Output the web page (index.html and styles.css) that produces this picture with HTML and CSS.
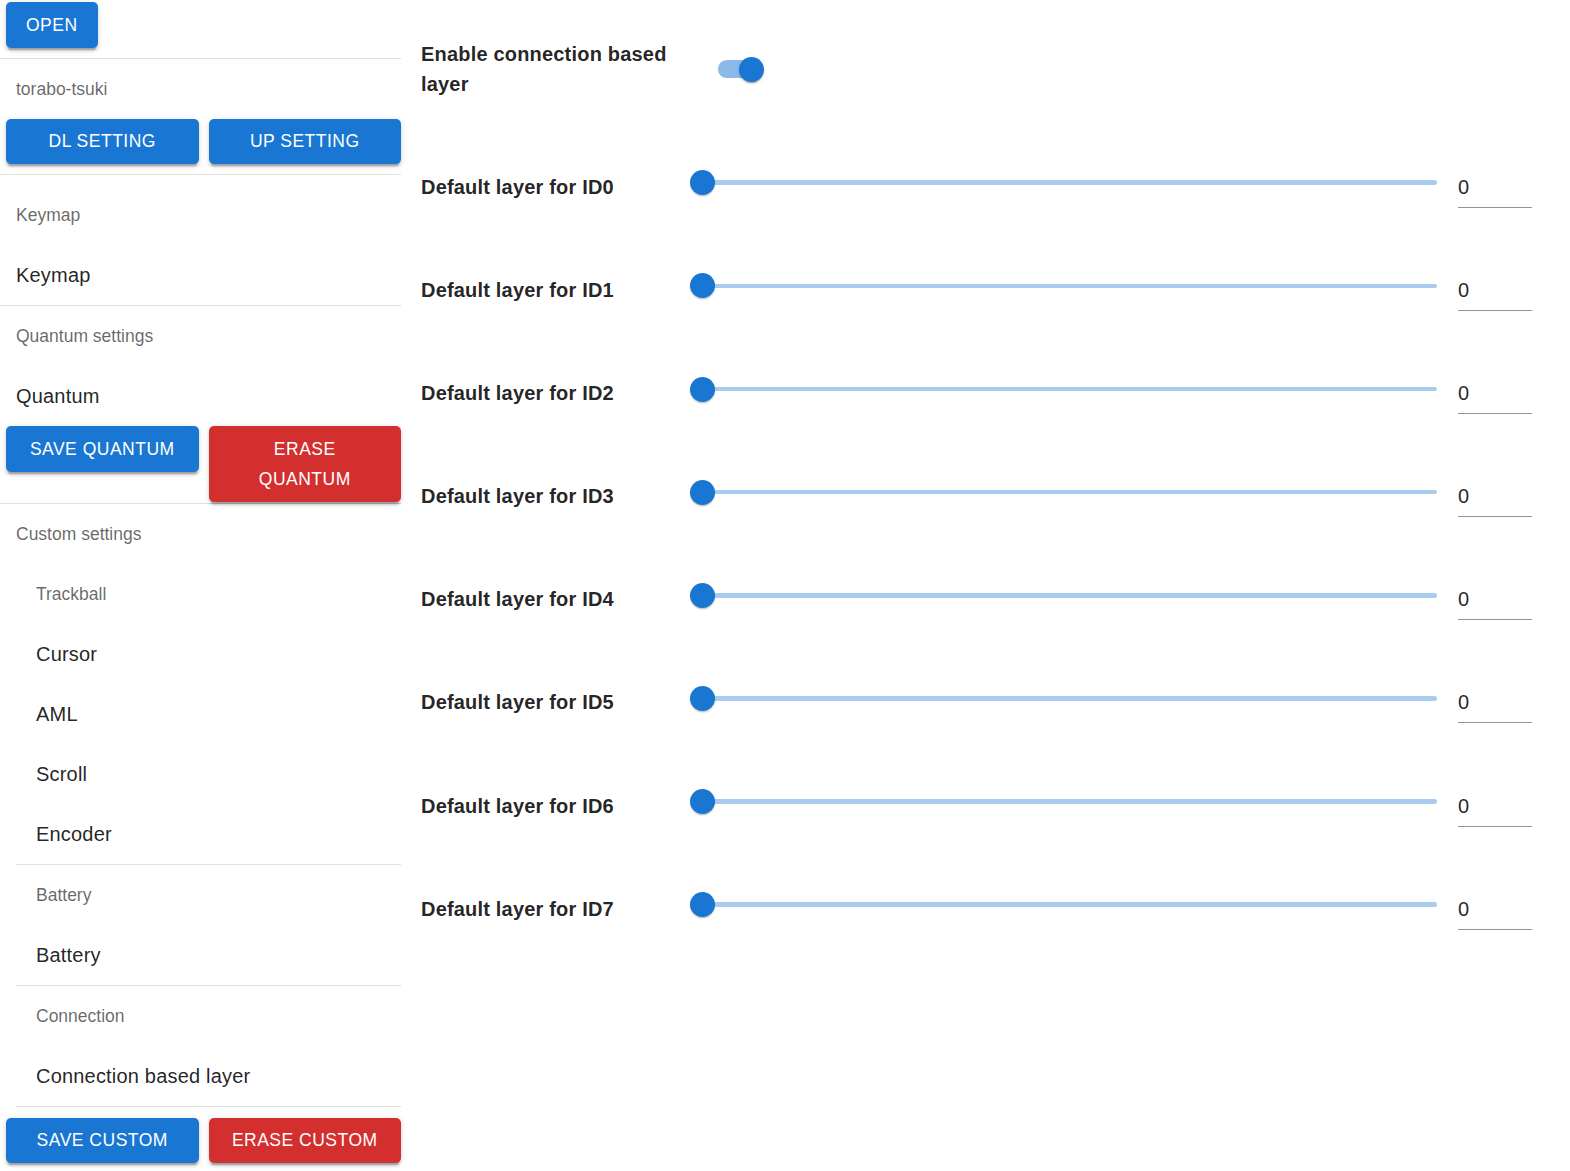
FILE: index.html
```html
<!DOCTYPE html>
<html>
<head>
<meta charset="utf-8">
<title>torabo-tsuki</title>
<link rel="stylesheet" href="styles.css">
</head>
<body>
<div class="app">
  <aside class="sidebar">
    <div class="btn-row top-row">
      <button class="btn primary">OPEN</button>
    </div>
    <div class="divider"></div>
    <div class="subheader">torabo-tsuki</div>
    <div class="btn-row two">
      <button class="btn primary">DL SETTING</button>
      <button class="btn primary">UP SETTING</button>
    </div>
    <div class="divider"></div>
    <div class="subheader gap-top">Keymap</div>
    <div class="item">Keymap</div>
    <div class="divider"></div>
    <div class="subheader">Quantum settings</div>
    <div class="item">Quantum</div>
    <div class="btn-row two tight">
      <button class="btn primary">SAVE QUANTUM</button>
      <button class="btn error"><span class="wrap">ERASE QUANTUM</span></button>
    </div>
    <div class="divider"></div>
    <div class="subheader">Custom settings</div>
    <div class="nested">
      <div class="subheader">Trackball</div>
      <div class="item">Cursor</div>
      <div class="item">AML</div>
      <div class="item">Scroll</div>
      <div class="item">Encoder</div>
    </div>
    <div class="divider inset"></div>
    <div class="nested">
      <div class="subheader">Battery</div>
      <div class="item">Battery</div>
    </div>
    <div class="divider inset"></div>
    <div class="nested">
      <div class="subheader">Connection</div>
      <div class="item">Connection based layer</div>
    </div>
    <div class="divider inset"></div>
    <div class="btn-row two gap-top">
      <button class="btn primary">SAVE CUSTOM</button>
      <button class="btn error">ERASE CUSTOM</button>
    </div>
  </aside>
  <main class="main">
    <div class="enable-row">
      <div class="label">Enable connection based layer</div>
      <div class="switch">
        <div class="switch-track"></div>
        <div class="switch-thumb"></div>
      </div>
    </div>
    <div class="setting-row">
      <div class="label">Default layer for ID0</div>
      <div class="slider"><div class="rail"><div class="thumb"></div></div></div>
      <div class="value">0</div>
    </div>
    <div class="setting-row">
      <div class="label">Default layer for ID1</div>
      <div class="slider"><div class="rail"><div class="thumb"></div></div></div>
      <div class="value">0</div>
    </div>
    <div class="setting-row">
      <div class="label">Default layer for ID2</div>
      <div class="slider"><div class="rail"><div class="thumb"></div></div></div>
      <div class="value">0</div>
    </div>
    <div class="setting-row">
      <div class="label">Default layer for ID3</div>
      <div class="slider"><div class="rail"><div class="thumb"></div></div></div>
      <div class="value">0</div>
    </div>
    <div class="setting-row">
      <div class="label">Default layer for ID4</div>
      <div class="slider"><div class="rail"><div class="thumb"></div></div></div>
      <div class="value">0</div>
    </div>
    <div class="setting-row">
      <div class="label">Default layer for ID5</div>
      <div class="slider"><div class="rail"><div class="thumb"></div></div></div>
      <div class="value">0</div>
    </div>
    <div class="setting-row">
      <div class="label">Default layer for ID6</div>
      <div class="slider"><div class="rail"><div class="thumb"></div></div></div>
      <div class="value">0</div>
    </div>
    <div class="setting-row">
      <div class="label">Default layer for ID7</div>
      <div class="slider"><div class="rail"><div class="thumb"></div></div></div>
      <div class="value">0</div>
    </div>
  </main>
</div>
</body>
</html>
```

FILE: styles.css
```css
* { box-sizing: border-box; }
html, body {
  margin: 0;
  padding: 0;
  background: #fff;
  font-family: "Liberation Sans", Arial, sans-serif;
  color: rgba(0,0,0,0.87);
}
.app {
  display: flex;
  align-items: flex-start;
  width: 1570px;
}
.sidebar {
  width: 401px;
  flex: 0 0 401px;
  padding-top: 2px;
}
.btn-row {
  display: flex;
  gap: 10px;
  padding-left: 6px;
  padding-bottom: 10px;
  align-items: flex-start;
}
.btn-row.two .btn { flex: 1 1 0; }
.btn-row.tight { padding-bottom: 1px; }
.btn-row.gap-top { padding-top: 10.5px; }
.btn {
  border: 0;
  margin: 0;
  font-family: "Liberation Sans", Arial, sans-serif;
  font-size: 17.5px;
  font-weight: 500;
  line-height: 30.6px;
  letter-spacing: 0.5px;
  text-transform: uppercase;
  color: #fff;
  padding: 7.5px 20px;
  border-radius: 5px;
  box-shadow: 0 3.75px 1.25px -2.5px rgba(0,0,0,0.2), 0 2.5px 2.5px 0 rgba(0,0,0,0.14), 0 1.25px 6.25px 0 rgba(0,0,0,0.12);
  cursor: pointer;
}
.btn.primary { background: #1976d2; }
.btn.error { background: #d32f2f; }
.btn .wrap {
  display: inline-block;
  width: min-content;
}
.divider {
  height: 1px;
  background: rgba(0,0,0,0.12);
}
.divider.inset { margin-left: 16px; }
.subheader {
  height: 60px;
  line-height: 60px;
  font-size: 17.5px;
  color: rgba(0,0,0,0.6);
  padding-left: 16px;
}
.subheader.gap-top { margin-top: 10px; }
.item {
  height: 60px;
  line-height: 60px;
  font-size: 20px;
  letter-spacing: 0.19px;
  color: rgba(0,0,0,0.87);
  padding-left: 16px;
}
.nested .subheader,
.nested .item { padding-left: 36px; }

.main {
  flex: 1 1 auto;
  padding: 39.2px 38px 0 20px;
}
.label {
  font-size: 20px;
  font-weight: 700;
  line-height: 30px;
  letter-spacing: 0.19px;
  color: rgba(0,0,0,0.87);
}
.enable-row {
  display: flex;
  height: 132.6px;
  align-items: flex-start;
}
.enable-row .label { width: 269px; flex: 0 0 269px; }
.switch {
  position: relative;
  margin-left: 28.3px;
  margin-top: 21.3px;
  width: 42.5px;
  height: 17.5px;
}
.switch-track {
  width: 42.5px;
  height: 17.5px;
  border-radius: 8.75px;
  background: #8cbae8;
}
.switch-thumb {
  position: absolute;
  left: 21.2px;
  top: -3.75px;
  width: 25px;
  height: 25px;
  border-radius: 50%;
  background: #1976d2;
  box-shadow: 0 2.5px 1.25px -1.25px rgba(0,0,0,0.2), 0 1.25px 1.25px 0 rgba(0,0,0,0.14), 0 1.25px 3.75px 0 rgba(0,0,0,0.12);
}
.setting-row {
  display: grid;
  grid-template-columns: 269px 1fr 74px;
  height: 103.14px;
  align-items: start;
}
.slider {
  height: 30px;
  padding: 0 21px 8px 12.5px;
  display: flex;
  align-items: center;
}
.rail {
  position: relative;
  width: 100%;
  height: 4.6px;
  border-radius: 2.5px;
  background: #a8cbee;
}
.thumb {
  position: absolute;
  left: -12.5px;
  top: 50%;
  margin-top: -12.5px;
  width: 25px;
  height: 25px;
  border-radius: 50%;
  background: #1976d2;
  box-shadow: 0 2px 2px -1px rgba(0,0,0,0.2), 0 1px 2px 0 rgba(0,0,0,0.12);
}
.value {
  font-size: 20px;
  line-height: 30px;
  padding-bottom: 5px;
  border-bottom: 1px solid rgba(0,0,0,0.42);
  color: rgba(0,0,0,0.87);
  letter-spacing: 0.19px;
}
```
